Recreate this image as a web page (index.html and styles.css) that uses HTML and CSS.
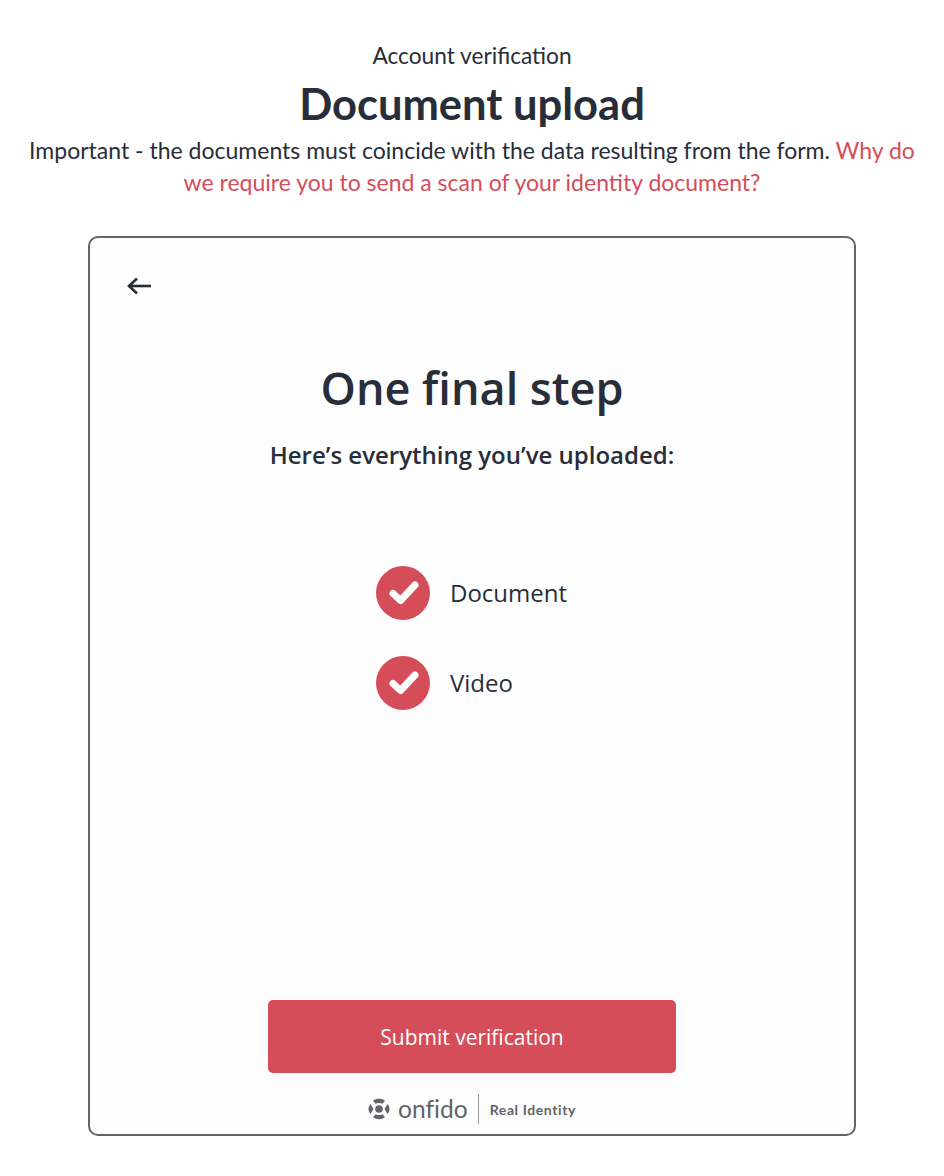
FILE: index.html
```html
<!doctype html>
<html lang="en">
	<head>
		<meta charset="UTF-8" />
		<title>Document upload</title>
		<link rel="stylesheet" href="styles.css">
	</head>
	<body>
		<header class="page-head">
			<p class="eyebrow">Account verification</p>
			<h1>Document upload</h1>
			<p class="intro">Important - the documents must coincide with the data resulting from the form. <a href="#">Why do we require you to send a scan of your identity document?</a></p>
		</header>

		<section class="card">
			<button class="back" aria-label="Back">
				<svg width="26" height="20" viewBox="0 0 26 20" fill="none" stroke="#282d3a" stroke-width="2.6">
					<path d="M25 10H3" />
					<path d="M11 2.500L3 10l8 7.500" />
				</svg>
			</button>

			<h2>One final step</h2>
			<p class="subtitle">Here’s everything you’ve uploaded:</p>

			<ul class="uploads">
				<li>
					<svg class="tick" width="54" height="54" viewBox="0 0 54 54">
						<circle cx="27" cy="27" r="27" fill="#d64d5a" />
						<path d="M17 27.500l7.500 7L39 19" fill="none" stroke="#fff" stroke-width="7" stroke-linecap="round" stroke-linejoin="round" />
					</svg>
					<span>Document</span>
				</li>
				<li>
					<svg class="tick" width="54" height="54" viewBox="0 0 54 54">
						<circle cx="27" cy="27" r="27" fill="#d64d5a" />
						<path d="M17 27.500l7.500 7L39 19" fill="none" stroke="#fff" stroke-width="7" stroke-linecap="round" stroke-linejoin="round" />
					</svg>
					<span>Video</span>
				</li>
			</ul>

			<button class="submit">Submit verification</button>

			<footer class="brand">
				<svg class="brand-mark" width="22" height="22" viewBox="0 0 22 22" fill="#626468">
					<circle cx="11" cy="11" r="3.800" />
					<path d="M5 2.800C8.500 .2 13.500 .2 17 2.800L14.500 5.800C12.500 4.600 9.500 4.600 7.500 5.800z" />
					<path d="M5 19.200C8.500 21.800 13.500 21.800 17 19.200L14.500 16.200C12.500 17.400 9.500 17.400 7.500 16.200z" />
					<path d="M2.500 6C-.2 9.500 -.2 12.500 2.500 16L5.500 11z" />
					<path d="M19.500 6C22.200 9.500 22.200 12.500 19.500 16L16.500 11z" />
				</svg>
				<span class="brand-name">onfido</span>
				<span class="brand-tag">Real Identity</span>
			</footer>
		</section>
	</body>
</html>
```

FILE: styles.css
```css
:root {
	--red: #d64d5a;
	--ink: #282d3a;
	--grey: #626468;
}

* {
	box-sizing: border-box;
}

body {
	margin: 0;
	padding: 40px 0 40px;
	background-color: #fff;
	color: var(--ink);
	font-family: 'Noto Sans', Arial, sans-serif;
}

.page-head {
	text-align: center;
	font-family: Lato, 'Noto Sans', sans-serif;
}

.eyebrow {
	margin: 0;
	font-size: 22.700px;
	line-height: 32px;
}

h1 {
	margin: 7px 0 0;
	font-size: 43.500px;
	line-height: 48px;
	font-weight: 700;
}

.intro {
	margin: 7px 0 0;
	padding: 0 20px;
	font-size: 23px;
	line-height: 32px;
}

.intro a {
	color: var(--red);
	text-decoration: none;
}

.card {
	display: flex;
	flex-direction: column;
	align-items: center;
	width: 768px;
	height: 900px;
	margin: 38px auto 0;
	border: 2px solid var(--grey);
	border-radius: 10px;
	background-color: #fdfdfd;
	font-family: 'Open Sans', sans-serif;
}

.back {
	align-self: flex-start;
	margin: 38px 0 0 36px;
	padding: 0;
	height: 20px;
	border: none;
	background: none;
}

h2 {
	margin: 62px 0 0;
	font-size: 45px;
	line-height: 60px;
	font-weight: 600;
}

.subtitle {
	margin: 21px 0 0;
	font-size: 24px;
	line-height: 32px;
	font-weight: 600;
}

.uploads {
	display: flex;
	flex-direction: column;
	gap: 36px;
	width: 192px;
	margin: 95px 0 0;
	padding: 0;
	list-style: none;
	font-size: 24px;
}

.uploads li {
	display: flex;
	align-items: center;
	gap: 20px;
}

.uploads span {
	margin-bottom: 2px;
}

.submit {
	width: 408px;
	height: 73px;
	margin-top: auto;
	border: none;
	border-radius: 5px;
	background-color: var(--red);
	color: #fff;
	font-family: inherit;
	font-size: 21px;
	font-weight: 500;
}

.brand {
	display: flex;
	align-items: center;
	height: 30px;
	margin: 21px 0 10px;
	color: var(--grey);
}

.brand-name {
	margin-left: 8px;
	padding-right: 10px;
	border-right: 1px solid #999;
	font-family: Lato, sans-serif;
	font-size: 24.600px;
	line-height: 30px;
	font-variant-ligatures: none;
}

.brand-tag {
	margin-left: 11px;
	font-family: Lato, sans-serif;
	font-size: 14px;
	font-weight: 700;
	letter-spacing: 0.6px;
}
```
